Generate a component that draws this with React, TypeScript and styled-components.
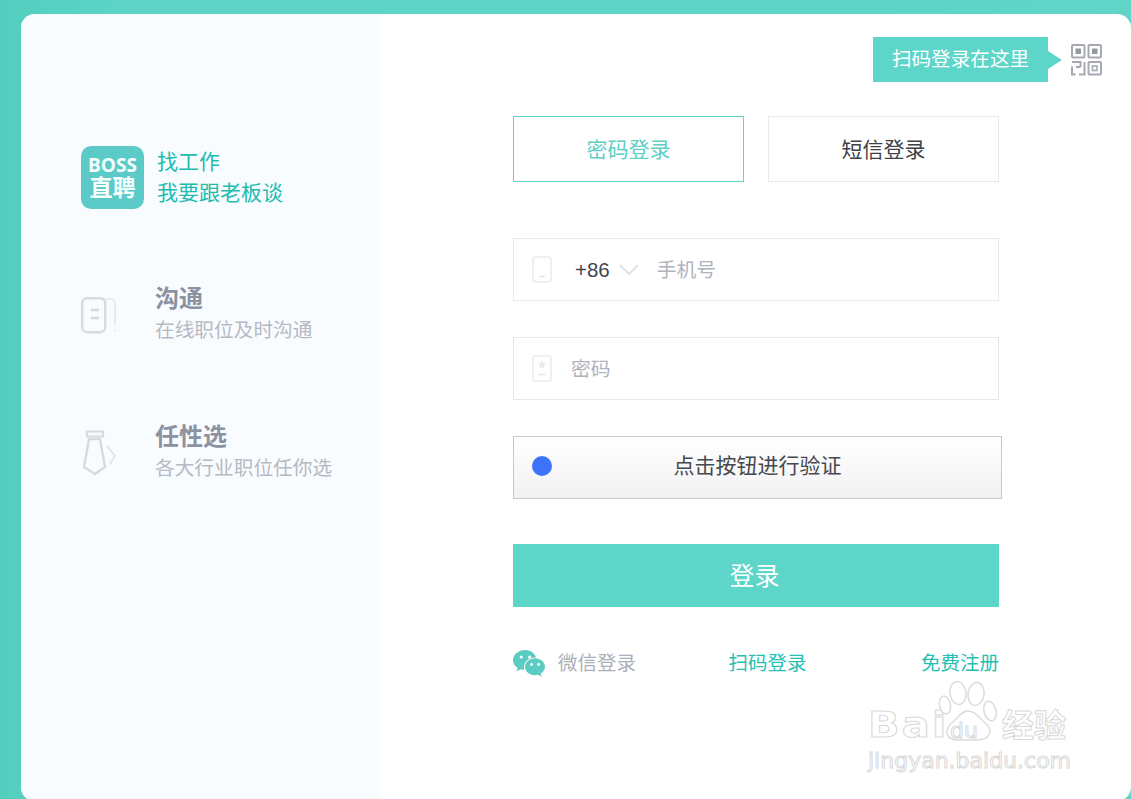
import React from "react";
import styled, { createGlobalStyle } from "styled-components";

const GlobalStyle = createGlobalStyle`
  html, body {
    margin: 0;
    padding: 0;
    background: #5dd5c8;
  }
  * {
    box-sizing: border-box;
  }
`;

const fontStack = `"Noto Sans CJK SC", "Liberation Sans", sans-serif`;

const PhoneIcon = () => (
  <svg width="20" height="27" viewBox="0 0 20 27" fill="none">
    <rect x="1" y="1" width="18" height="25" rx="3" stroke="#e9ebef" strokeWidth="1.6" />
    <path d="M7 20.5h6" stroke="#e2e4e9" strokeWidth="1.4" />
  </svg>
);

const LockIcon = () => (
  <svg width="20" height="27" viewBox="0 0 20 27" fill="none">
    <rect x="1" y="1" width="18" height="25" rx="2" stroke="#e9ebef" strokeWidth="1.6" />
    <path d="M10 5.5l1.3 2.7 2.9.4-2.1 2 .5 2.9-2.6-1.4-2.6 1.4.5-2.9-2.1-2 2.9-.4z" fill="#e6e8ec" />
    <path d="M6.5 19.5h7" stroke="#e2e4e9" strokeWidth="1.4" />
  </svg>
);

const ChatIcon = () => (
  <svg width="36" height="37" viewBox="0 0 36 37" fill="none">
    <rect x="1.2" y="1.2" width="23" height="34" rx="5" stroke="#d6dae1" strokeWidth="2.4" />
    <path d="M24 2h5q5 0 5 5v21" stroke="#e3e6eb" strokeWidth="1.6" />
    <path d="M10 13h8M10 21h8" stroke="#d3d7de" strokeWidth="2.6" />
    <path d="M34 32.500v2" stroke="#e3e6eb" strokeWidth="1.6" />
  </svg>
);

const TieIcon = () => (
  <svg width="36" height="46" viewBox="0 0 36 46" fill="none">
    <path d="M6 1.500h16v5H6z" stroke="#d6dae1" strokeWidth="2.2" />
    <path d="M8 9h11l5 28-10 7-11-7z" stroke="#d6dae1" strokeWidth="2.4" strokeLinejoin="round" />
    <path d="M26 16l8 10-5 8" stroke="#e0e3e8" strokeWidth="1.8" />
  </svg>
);

const QrIcon = () => (
  <svg width="31" height="32" viewBox="0 0 31 32" fill="none">
    <rect x="1" y="1" width="12.500" height="12.500" rx="1" stroke="#a6a9b2" strokeWidth="2" />
    <rect x="17.500" y="1" width="12.500" height="12.500" rx="1" stroke="#a6a9b2" strokeWidth="2" />
    <rect x="4.500" y="4.500" width="5.500" height="5.500" fill="#9599a3" />
    <rect x="21" y="4.500" width="5.500" height="5.500" fill="#9599a3" />
    <rect x="17.500" y="18" width="12.500" height="12.500" rx="1" stroke="#a6a9b2" strokeWidth="2" />
    <rect x="21.500" y="22" width="4.500" height="4.500" stroke="#a6a9b2" strokeWidth="1.600" />
    <path d="M1 18h8.500v5M13.500 18v12.500H8M1 22.500v8h3.500M5 23h4.500" stroke="#a6a9b2" strokeWidth="2" />
  </svg>
);

const ChevronIcon = () => (
  <svg width="20" height="12" viewBox="0 0 20 12" fill="none">
    <path d="M1 1l9 9 9-9" stroke="#e0e3e8" strokeWidth="2" />
  </svg>
);

const WechatIcon = () => (
  <svg width="32" height="28" viewBox="0 0 32 28">
    <path d="M12.500 0C5.600 0 0 4.600 0 10.200c0 3.200 1.800 5.900 4.700 7.800L3.500 21.500l4.200-2.200c1.200.3 2.500.6 3.800.6-.4-1-.5-2-.5-3 0-5.300 5-9.400 11.200-9.400h1C21.800 3.200 17.500 0 12.500 0z" fill="#5ccbc2" />
    <circle cx="8.200" cy="7" r="1.600" fill="#fff" />
    <circle cx="16.600" cy="7" r="1.600" fill="#fff" />
    <path d="M32 16.800c0-4.800-4.500-8.500-10-8.500s-10 3.700-10 8.500 4.500 8.500 10 8.500c1.100 0 2.200-.2 3.200-.5l3.500 2-1-3c2.600-1.700 4.300-4.100 4.300-7z" fill="#5ccbc2" />
    <circle cx="18.600" cy="14.500" r="1.400" fill="#fff" />
    <circle cx="25.600" cy="14.500" r="1.400" fill="#fff" />
  </svg>
);

const PawIcon = () => (
  <svg width="60" height="60" viewBox="0 0 60 60" fill="#fff" stroke="#dcdcdc" strokeWidth="1.500">
    <ellipse cx="7" cy="24" rx="5.500" ry="9" transform="rotate(-12 7 24)" />
    <ellipse cx="20" cy="12" rx="8" ry="11.500" transform="rotate(-8 20 12)" />
    <ellipse cx="38" cy="13" rx="8" ry="11.500" transform="rotate(8 38 13)" />
    <ellipse cx="52" cy="30" rx="6" ry="10" transform="rotate(-14 52 30)" />
    <path d="M30 30c-6 0-9 5-14 10-5 4-8 8-7 12 1 5 6 7 12 7h18c6 0 11-2 13-7 1-4-2-8-7-12-5-5-9-10-15-10z" />
  </svg>
);

export default function App() {
  return (
    <>
      <GlobalStyle />
      <Page>
        <Card>
          <Sidebar>
            <BrandRow>
              <BrandLogo>
                <BrandLatin>BOSS</BrandLatin>
                <BrandHan>直聘</BrandHan>
              </BrandLogo>
              <BrandText>
                <div>找工作</div>
                <div>我要跟老板谈</div>
              </BrandText>
            </BrandRow>
            <Feature $gap={71}>
              <FeatureIcon>
                <ChatIcon />
              </FeatureIcon>
              <div>
                <FeatureTitle>沟通</FeatureTitle>
                <FeatureText>在线职位及时沟通</FeatureText>
              </div>
            </Feature>
            <Feature $gap={74}>
              <FeatureIcon>
                <TieIcon />
              </FeatureIcon>
              <div>
                <FeatureTitle>任性选</FeatureTitle>
                <FeatureText>各大行业职位任你选</FeatureText>
              </div>
            </Feature>
          </Sidebar>
          <Main>
            <ScanHint>
              <ScanBubble>扫码登录在这里</ScanBubble>
              <QrIcon />
            </ScanHint>
            <Form>
              <Tabs>
                <Tab $active>密码登录</Tab>
                <Tab>短信登录</Tab>
              </Tabs>
              <Field $top={56}>
                <PhoneIcon />
                <AreaCode>+86</AreaCode>
                <ChevronIcon />
                <Placeholder $left={18}>手机号</Placeholder>
              </Field>
              <Field $top={36}>
                <LockIcon />
                <Placeholder $left={19}>密码</Placeholder>
              </Field>
              <Verify>
                <VerifyDot />
                <VerifyLabel>点击按钮进行验证</VerifyLabel>
              </Verify>
              <Submit>登录</Submit>
              <Links>
                <WechatLink>
                  <WechatIcon />
                  <LinkText>微信登录</LinkText>
                </WechatLink>
                <TealLink $shift={22}>扫码登录</TealLink>
                <TealLink>免费注册</TealLink>
              </Links>
            </Form>
          </Main>
          <Watermark>
            <WatermarkTop>
              <WatermarkLatin>Bai</WatermarkLatin>
              <Paw>
                <PawIcon />
                <PawText>du</PawText>
              </Paw>
              <WatermarkHan>经验</WatermarkHan>
            </WatermarkTop>
            <WatermarkUrl>jingyan.baidu.com</WatermarkUrl>
          </Watermark>
        </Card>
      </Page>
    </>
  );
}

const Page = styled.div`
  height: 799px;
  padding: 14px 0 0 21px;
  overflow: hidden;
  background: linear-gradient(90deg, #53cfbf 0, #5dd4c6 12%, #5fd4c7 100%);
  font-family: ${fontStack};
`;

const Card = styled.div`
  position: relative;
  display: flex;
  height: 787px;
  border-radius: 14px;
  overflow: hidden;
  background: #fff;
`;

const Sidebar = styled.aside`
  width: 359px;
  flex: none;
  padding: 132px 0 0 60px;
  background: #f9fcff;
`;

const BrandRow = styled.div`
  display: flex;
  align-items: center;
  gap: 13px;
  height: 63px;
`;

const BrandLogo = styled.div`
  width: 63px;
  height: 63px;
  display: flex;
  flex-direction: column;
  align-items: center;
  justify-content: center;
  border-radius: 10px;
  background: #5ccbc7;
  color: #f4fffd;
  font-weight: 700;
`;

const BrandLatin = styled.div`
  height: 18px;
  font-size: 19px;
  line-height: 18px;
  font-family: "Open Sans", "Liberation Sans", sans-serif;
`;

const BrandHan = styled.div`
  height: 25px;
  font-size: 23px;
  line-height: 25px;
`;

const BrandText = styled.div`
  padding-bottom: 3px;
  color: #21bcae;
  font-size: 21px;
  line-height: 31px;
`;

const Feature = styled.div<{ $gap: number }>`
  display: flex;
  align-items: center;
  gap: 38px;
  margin-top: ${(p) => p.$gap}px;
`;

const FeatureIcon = styled.div`
  width: 36px;
  display: flex;
  justify-content: center;
  padding-top: 6px;
`;

const FeatureTitle = styled.div`
  color: #8d92a1;
  font-size: 24px;
  font-weight: 700;
  line-height: 34px;
`;

const FeatureText = styled.div`
  color: #b6b9c3;
  font-size: 19.700px;
  line-height: 30px;
`;

const Main = styled.main`
  flex: 1;
  padding-top: 23px;
`;

const ScanHint = styled.div`
  display: flex;
  align-items: center;
  justify-content: flex-end;
  gap: 23px;
  padding-right: 29px;
`;

const ScanBubble = styled.div`
  position: relative;
  width: 175px;
  height: 45px;
  line-height: 42px;
  text-align: center;
  background: #5dd5c8;
  color: #fff;
  font-size: 19.600px;

  &::after {
    content: "";
    position: absolute;
    left: 100%;
    top: 14px;
    border-left: 14px solid #5dd5c8;
    border-top: 9px solid transparent;
    border-bottom: 9px solid transparent;
  }
`;

const Form = styled.div`
  width: 486px;
  margin: 34px 0 0 133px;
`;

const Tabs = styled.div`
  display: flex;
  justify-content: space-between;
`;

const Tab = styled.div<{ $active?: boolean }>`
  width: 231px;
  height: 66px;
  line-height: 62px;
  text-align: center;
  font-size: 21px;
  border: 1px solid ${(p) => (p.$active ? "#5dd5c8" : "#e6e8ec")};
  color: ${(p) => (p.$active ? "#5dcfc4" : "#3d4148")};
`;

const Field = styled.div<{ $top: number }>`
  display: flex;
  align-items: center;
  height: 63px;
  margin-top: ${(p) => p.$top}px;
  padding-left: 18px;
  border: 1px solid #e6e8ec;
`;

const AreaCode = styled.span`
  margin: 0 9px 0 23px;
  font-family: "Liberation Sans", sans-serif;
  font-size: 20.500px;
  color: #3f4550;
`;

const Placeholder = styled.span<{ $left: number }>`
  margin-left: ${(p) => p.$left}px;
  padding-bottom: 3px;
  font-size: 19.800px;
  color: #b0b3bc;
`;

const Verify = styled.div`
  position: relative;
  display: flex;
  align-items: center;
  justify-content: center;
  width: 489px;
  height: 63px;
  margin-top: 36px;
  padding-bottom: 8px;
  border: 1px solid #c8c8c8;
  background: linear-gradient(#ffffff, #f2f2f2);
`;

const VerifyDot = styled.span`
  position: absolute;
  left: 18px;
  top: 19px;
  width: 20px;
  height: 20px;
  border-radius: 50%;
  background: #3b73fb;
`;

const VerifyLabel = styled.span`
  font-size: 21px;
  color: #45484f;
`;

const Submit = styled.div`
  height: 63px;
  margin-top: 45px;
  padding-right: 3px;
  line-height: 61px;
  text-align: center;
  background: #5dd5c8;
  color: #fff;
  font-size: 25px;
`;

const Links = styled.div`
  display: flex;
  align-items: center;
  justify-content: space-between;
  margin-top: 40px;
  font-size: 19.500px;
`;

const WechatLink = styled.div`
  display: flex;
  align-items: center;
  gap: 13px;
  color: #acafb8;
`;

const LinkText = styled.span`
  padding-bottom: 4px;
`;

const TealLink = styled.a<{ $shift?: number }>`
  margin-right: ${(p) => p.$shift ?? 0}px;
  padding-bottom: 4px;
  color: #27bfb1;
`;

const Watermark = styled.div`
  position: absolute;
  left: 847px;
  top: 663px;
  width: 204px;
  color: #fff;
  -webkit-text-stroke: 1px #d9d9d9;
  font-family: "DejaVu Sans", sans-serif;
`;

const WatermarkTop = styled.div`
  display: flex;
  align-items: flex-end;
  height: 64px;
`;

const WatermarkLatin = styled.span`
  width: 70px;
  font-size: 36px;
  font-weight: 700;
  letter-spacing: 2px;
  line-height: 32px;
  transform: scaleX(1.15);
  transform-origin: left center;
`;

const Paw = styled.div`
  position: relative;
  width: 64px;
  height: 60px;
`;

const PawText = styled.span`
  position: absolute;
  left: 12px;
  bottom: -1px;
  font-size: 22px;
  line-height: 22px;
`;

const WatermarkHan = styled.span`
  font-family: ${fontStack};
  font-size: 32px;
  line-height: 36px;
  font-weight: 700;
`;

const WatermarkUrl = styled.div`
  margin-top: 7px;
  font-size: 22px;
  line-height: 26px;
  white-space: nowrap;
`;
